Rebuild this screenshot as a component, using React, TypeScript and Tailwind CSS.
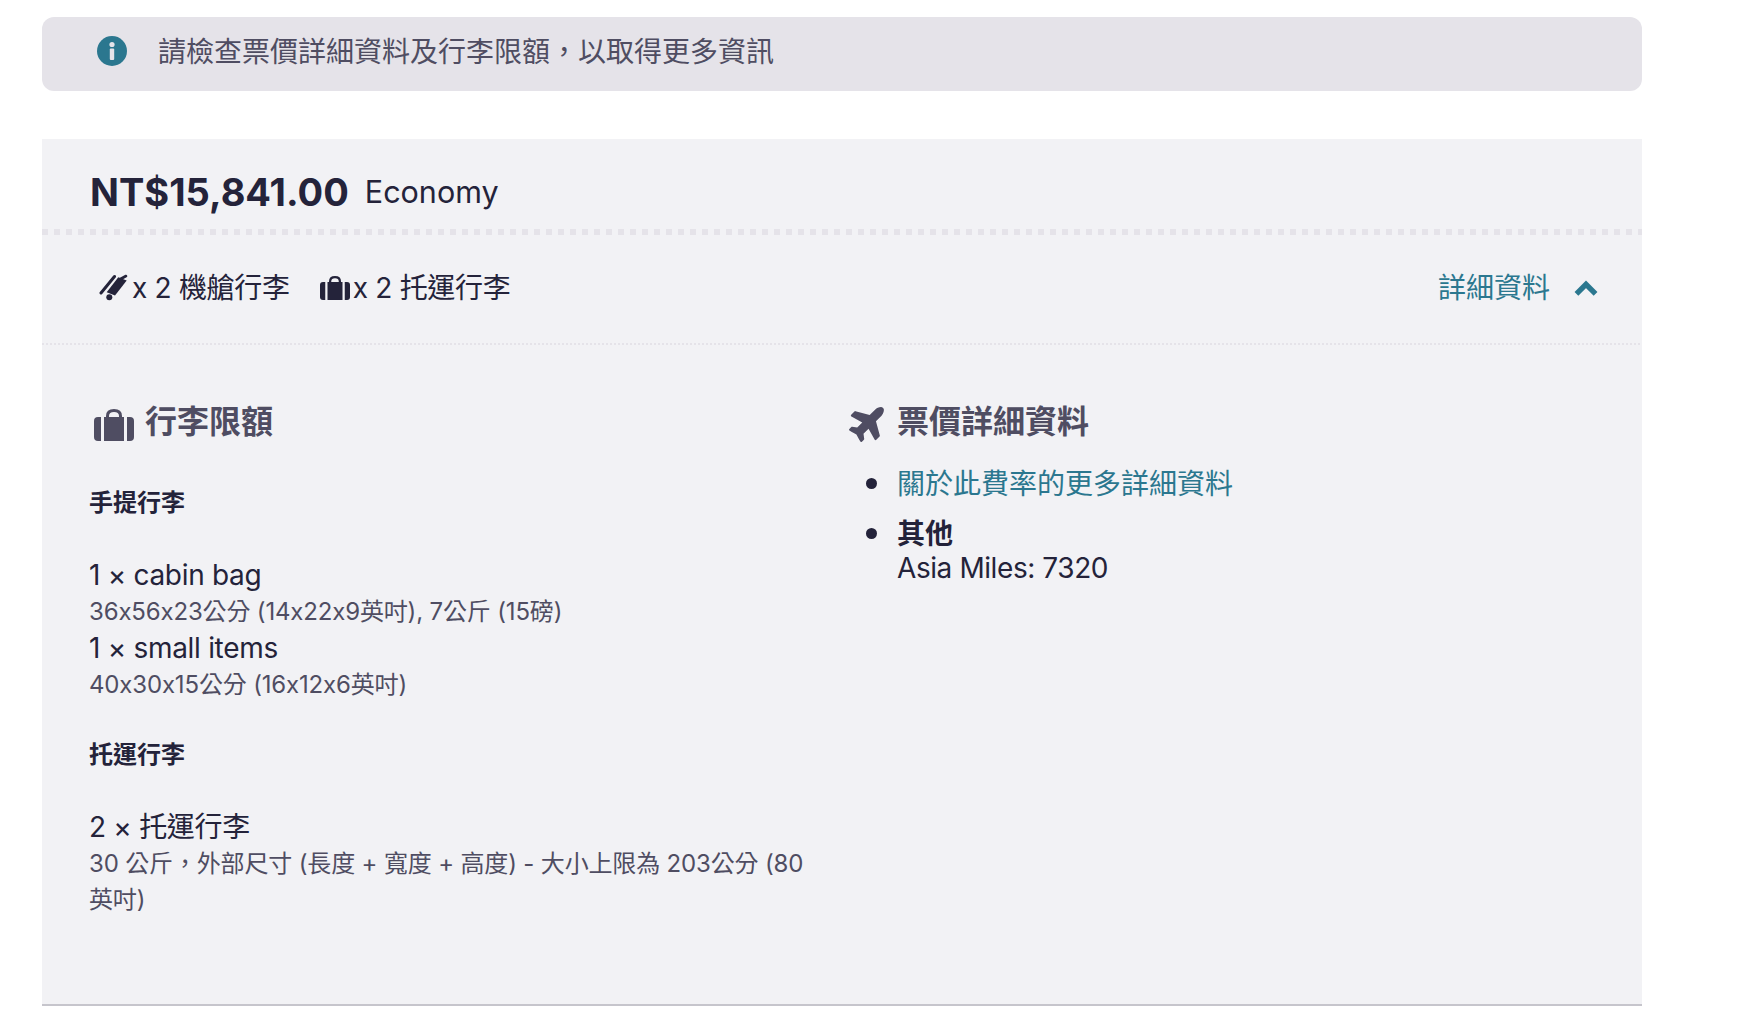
import React from 'react';
import { FaPlane } from 'react-icons/fa';

const teal = 'text-[#2b778f]';
const navy = 'text-[#24233a]';
const slate = 'text-[#4f4d62]';

const InfoIcon = () => (
  <svg viewBox="0 0 30 30" className={`w-[30px] h-[30px] shrink-0 ${teal}`} fill="currentColor">
    <circle cx="15" cy="15" r="15" />
    <circle cx="15" cy="8.5" r="2.6" fill="#e5e3e9" />
    <rect x="12.8" y="12.5" width="4.4" height="11.5" rx="1" fill="#e5e3e9" />
  </svg>
);

// tilted carry-on bag, the icon pack only has an upright one
const CabinBagIcon = () => (
  <svg viewBox="0 0 30 30" className="w-[30px] h-[30px] shrink-0" fill="currentColor">
    <path d="M2 20 L15.5 3.5" stroke="currentColor" strokeWidth="3" strokeLinecap="round" />
    <path d="M7.7 19.2 L19.3 4.2 L27.7 7.5 L16 22.5 Z" />
    <path d="M21.5 6 L27 3" stroke="currentColor" strokeWidth="2.6" strokeLinecap="round" />
    <circle cx="10.3" cy="24.2" r="3" />
  </svg>
);

const SuitcaseIcon = ({ className }: { className: string }) => (
  <svg viewBox="0 0 40 32" className={`shrink-0 ${className}`} fill="currentColor">
    <path d="M7 8 H4 Q0 8 0 12 V28 Q0 32 4 32 H7 Z" />
    <path d="M33 8 H36 Q40 8 40 12 V28 Q40 32 36 32 H33 Z" />
    <path d="M10 8 H30 V32 H10 Z" />
    <path d="M13.5 9 V7 Q13.5 1.5 20 1.5 Q26.5 1.5 26.5 7 V9" fill="none" stroke="currentColor" strokeWidth="3" />
  </svg>
);

const BagRow = ({ title, size }: { title: string; size: string }) => (
  <>
    <div className={`text-[28px] leading-[37px] tracking-[-0.3px] ${navy}`}>{title}</div>
    <div className={`text-[24px] leading-[36px] tracking-[-0.16px] ${slate}`}>{size}</div>
  </>
);

const App: React.FC = () => {
  return (
    <div
      className="min-h-[1024px] bg-white pl-[42px] pt-[17px] w-[1642px] [font-feature-settings:'calt'_0]"
      style={{ fontFamily: 'Inter, "Noto Sans CJK TC", sans-serif' }}
    >
      {/* Notice */}
      <div className="h-[74px] rounded-[12px] bg-[#e5e3e9] flex items-center pl-[55px] pb-[6px]">
        <InfoIcon />
        <span className={`ml-[31px] pt-[2px] text-[28px] ${slate}`}>請檢查票價詳細資料及行李限額，以取得更多資訊</span>
      </div>

      {/* Fare card */}
      <div className="mt-[48px] bg-[#f2f2f5] border-b-2 border-[#c6c5cc] h-[867px]">
        <div className={`h-[90px] flex items-center pl-[48px] pt-[16px] ${navy}`}>
          <span className="text-[38px] font-bold">NT$15,841.00</span>
          <span className="ml-[16px] text-[30.5px]">Economy</span>
        </div>
        <div className="h-[6px] bg-[repeating-linear-gradient(90deg,#e5e3e9_0,#e5e3e9_6px,transparent_6px,transparent_12px)]" />

        <div className={`h-[108px] flex items-center justify-between pl-[57px] pr-[43px] pb-[3px] text-[28px] ${navy}`}>
          <div className="flex items-center tracking-[-0.3px]">
            <CabinBagIcon />
            <span className="ml-[3px]">x 2 機艙行李</span>
            <SuitcaseIcon className="ml-[30px] w-[30px] h-[24px]" />
            <span className="ml-[3px]">x 2 托運行李</span>
          </div>
          <div className={`flex items-center ${teal}`}>
            <span>詳細資料</span>
            <svg viewBox="0 0 24 16" className="ml-[23px] w-[26px] h-[17px]" fill="none" stroke="currentColor" strokeWidth="5">
              <path d="M3 14 L12 5 L21 14" />
            </svg>
          </div>
        </div>
        <div className="h-[2px] bg-[repeating-linear-gradient(90deg,#e5e3e9_0,#e5e3e9_2px,transparent_2px,transparent_4px)]" />

        <div className="flex pt-[57px]">
          {/* Baggage */}
          <div className="w-[807px] pl-[47px]">
            <div className={`flex items-center h-[40px] ${slate}`}>
              <SuitcaseIcon className="ml-[5px] mt-[6px] w-[40px] h-[32px]" />
              <h2 className="ml-[11px] text-[32px] font-bold">行李限額</h2>
            </div>
            <h3 className={`mt-[43px] text-[24px] leading-[36px] font-bold ${navy}`}>手提行李</h3>
            <div className="mt-[36px]">
              <BagRow title="1 × cabin bag" size="36x56x23公分 (14x22x9英吋), 7公斤 (15磅)" />
              <BagRow title="1 × small items" size="40x30x15公分 (16x12x6英吋)" />
            </div>
            <h3 className={`mt-[34px] text-[24px] leading-[36px] font-bold ${navy}`}>托運行李</h3>
            <div className="mt-[36px] w-[725px]">
              <BagRow title="2 × 托運行李" size="30 公斤，外部尺寸 (長度 + 寬度 + 高度) - 大小上限為 203公分 (80 英吋)" />
            </div>
          </div>

          {/* Fare details */}
          <div className="flex-1">
            <div className={`flex items-center h-[40px] ${slate}`}>
              <FaPlane className="w-[40px] h-[40px] -rotate-45" />
              <h2 className="ml-[8px] text-[32px] font-bold">票價詳細資料</h2>
            </div>
            <ul className={`mt-[25px] pl-[17px] text-[28px] ${navy}`}>
              <li className="flex">
                <span className="mt-[11px] w-[11px] h-[11px] rounded-full bg-[#24233a]" />
                <span className={`ml-[20px] leading-[34px] ${teal}`}>關於此費率的更多詳細資料</span>
              </li>
              <li className="mt-[16px] flex">
                <span className="mt-[11px] w-[11px] h-[11px] rounded-full bg-[#24233a]" />
                <div className="ml-[20px]">
                  <div className="font-bold leading-[34px]">其他</div>
                  <div className="leading-[34px] tracking-[-0.42px]">Asia Miles: 7320</div>
                </div>
              </li>
            </ul>
          </div>
        </div>
      </div>
    </div>
  );
};

export default App;
